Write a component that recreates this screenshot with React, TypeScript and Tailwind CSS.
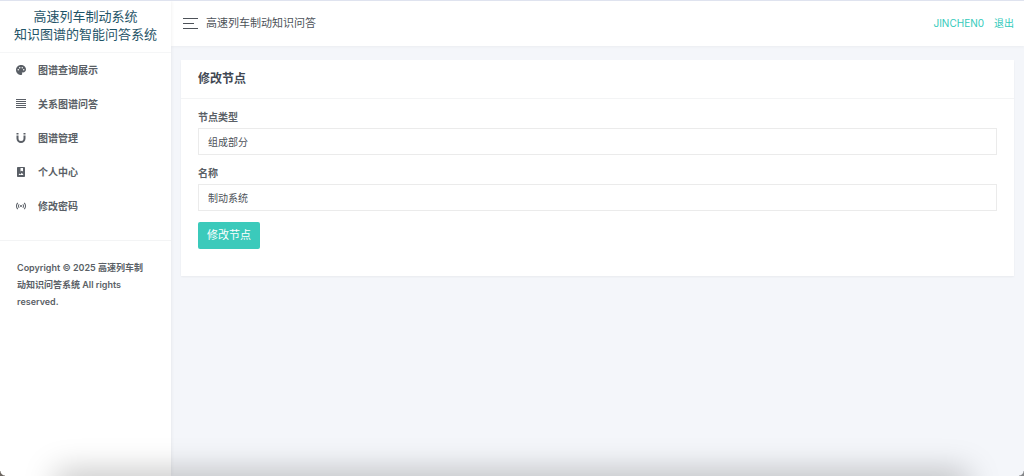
import React, { useState } from 'react';
import { MdPalette, MdPhotoAlbum } from 'react-icons/md';

interface MenuItem {
  label: string;
  icon: React.ReactNode;
}

const AlignIcon = () => (
  <svg className="size-3" viewBox="0 0 12 12" fill="currentColor" shapeRendering="crispEdges">
    <path d="M1 1h10v1H1zM1 3h10v1H1zM1 5h10v1H1zM1 7h10v1H1zM1 9h10v1H1z" />
  </svg>
);

const MagnetIcon = () => (
  <svg className="size-3" viewBox="0 0 24 24" fill="currentColor">
    <path d="M3 7v6a9 9 0 0 0 18 0V7h-4v6a5 5 0 0 1-10 0V7M17 5h4V2h-4M3 5h4V2H3" />
  </svg>
);

const AccessPointIcon = () => (
  <svg className="size-3" viewBox="0 0 24 24" fill="currentColor">
    <path d="M4.93 4.93C3.12 6.74 2 9.24 2 12s1.12 5.26 2.93 7.07l1.41-1.41C4.89 16.22 4 14.22 4 12s.89-4.22 2.34-5.66L4.93 4.93m14.14 0-1.41 1.41C19.11 7.79 20 9.79 20 12s-.89 4.22-2.34 5.66l1.41 1.41C20.88 17.26 22 14.76 22 12s-1.12-5.26-2.93-7.07M7.76 7.76C6.67 8.85 6 10.35 6 12s.67 3.15 1.76 4.24l1.41-1.41C8.45 14.11 8 13.11 8 12s.45-2.11 1.17-2.83L7.76 7.76m8.48 0-1.41 1.41C15.55 9.89 16 10.89 16 12s-.45 2.11-1.17 2.83l1.41 1.41C17.33 15.15 18 13.65 18 12s-.67-3.15-1.76-4.24M12 10a2 2 0 1 0 0 4 2 2 0 0 0 0-4" />
  </svg>
);

const menuItems: MenuItem[] = [
  { label: '图谱查询展示', icon: <MdPalette className="size-3" /> },
  { label: '关系图谱问答', icon: <AlignIcon /> },
  { label: '图谱管理', icon: <MagnetIcon /> },
  { label: '个人中心', icon: <MdPhotoAlbum className="size-3" /> },
  { label: '修改密码', icon: <AccessPointIcon /> },
];

const Sidebar = () => (
  <aside className="z-10 w-[171px] shrink-0 bg-white shadow-[0_0_4px_rgba(0,0,0,0.08)]">
    <a
      href="#"
      className="flex h-[52px] flex-col items-center justify-center border-b border-[#f5f6f7] pb-1 text-[13px] leading-[18px] text-[#1f5468]"
    >
      <span>高速列车制动系统</span>
      <span>知识图谱的智能问答系统</span>
    </a>
    <nav className="border-b border-[#f3f4f5] pb-[17px]">
      {menuItems.map((item) => (
        <a
          key={item.label}
          href="#"
          className="flex h-[34px] items-center gap-[11px] px-[15px] text-[10px] font-semibold text-[#5a5f66] hover:text-[#33cabb]"
        >
          {item.icon}
          {item.label}
        </a>
      ))}
    </nav>
    <p className="pt-[18px] pr-6 pl-[17px] text-[9px] leading-[17px] font-semibold text-[#5a5f66]">
      Copyright © 2025 高速列车制动知识问答系统 All rights reserved.
    </p>
  </aside>
);

const Header = () => (
  <header className="flex h-[45px] items-center justify-between bg-white px-[10px] shadow-[0_1px_3px_rgba(0,0,0,0.04)]">
    <div className="flex items-center gap-2 pl-[2px]">
      <button type="button" aria-label="菜单" className="flex w-[15px] flex-col gap-1">
        <span className="h-px w-full bg-[#4d5259]" />
        <span className="h-px w-[11px] bg-[#4d5259]" />
        <span className="h-px w-full bg-[#4d5259]" />
      </button>
      <span className="text-[11px] text-[#4d5259]">高速列车制动知识问答</span>
    </div>
    <div className="flex items-center gap-[10px] text-[10px] text-[#33cabb]">
      <a href="#">JINCHEN0</a>
      <a href="#">退出</a>
    </div>
  </header>
);

interface FieldProps {
  id: string;
  label: string;
  value: string;
  onChange: (value: string) => void;
}

const Field: React.FC<FieldProps> = ({ id, label, value, onChange }) => (
  <div className="mb-[10px]">
    <label htmlFor={id} className="mb-[3px] block text-[10px] leading-4 font-semibold text-[#5a5f66]">
      {label}
    </label>
    <input
      id={id}
      type="text"
      value={value}
      onChange={(e) => onChange(e.target.value)}
      className="block h-[27px] w-full border border-[#ebebeb] bg-white px-[9px] text-[10px] text-[#4d5259] outline-none focus:border-[#33cabb]"
    />
  </div>
);

const App = () => {
  const [nodeType, setNodeType] = useState('组成部分');
  const [name, setName] = useState('制动系统');

  return (
    <div className="relative flex min-h-screen overflow-hidden border-t border-[#dfe3ef] bg-[#f4f6fa] font-['Inter','Noto_Sans_CJK_SC',sans-serif]">
      <Sidebar />
      <div className="min-w-0 flex-1">
        <Header />
        <main className="p-[10px] pt-[14px]">
          <section className="bg-white shadow-[0_1px_2px_rgba(0,0,0,0.05)]">
            <h4 className="border-b border-[#f3f4f5] px-[17px] py-[10px] text-[12px] leading-[18px] font-semibold text-[#414853]">
              修改节点
            </h4>
            <form className="px-[17px] pt-[10px] pb-[27px]" onSubmit={(e) => e.preventDefault()}>
              <Field id="node-type" label="节点类型" value={nodeType} onChange={setNodeType} />
              <Field id="node-name" label="名称" value={name} onChange={setName} />
              <button
                type="submit"
                className="h-[27px] rounded-[2px] bg-[#3bcabb] px-[9px] text-[11px] text-white hover:bg-[#52d3c7]"
              >
                修改节点
              </button>
            </form>
          </section>
        </main>
      </div>

      {/* soft shade along the bottom edge of the window */}
      <div className="pointer-events-none absolute inset-x-16 -bottom-4 z-20 h-3 shadow-[0_0_32px_8px_rgba(0,0,0,0.26)]" />
      <div className="pointer-events-none absolute bottom-0 left-0 z-20 size-[5px] bg-[radial-gradient(circle_at_top_right,transparent_4px,#6b6560_5px)]" />
      <div className="pointer-events-none absolute right-0 bottom-0 z-20 size-[5px] bg-[radial-gradient(circle_at_top_left,transparent_4px,#85878a_5px)]" />
    </div>
  );
};

export default App;
